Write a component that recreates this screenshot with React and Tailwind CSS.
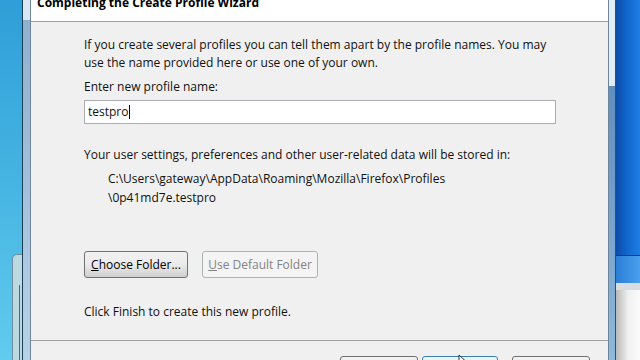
import React from 'react';

const font = { fontFamily: '"Open Sans", "Noto Sans", sans-serif' };

function WinButton({ children, className = '', disabled, hot }) {
  return (
    <div
      className={
        'flex items-center justify-center rounded-[3px] border text-[12px] leading-none ' +
        (disabled
          ? 'border-[#adb2b5] bg-[#f4f4f4] text-[#838383] '
          : hot
          ? 'border-[#3c7fb1] bg-gradient-to-b from-[#eaf6fd] to-[#bee6fd] text-black '
          : 'border-[#707070] bg-gradient-to-b from-[#f2f2f2] via-[#ebebeb] to-[#cfcfcf] text-black ') +
        className
      }
    >
      {children}
    </div>
  );
}

export default function App() {
  return (
    <div className="flex h-[360px] w-[640px] overflow-hidden bg-[#f0f0f0] text-[#111]" style={font}>
      {/* left desktop strip */}
      <div className="flex w-[22px] shrink-0 flex-col bg-gradient-to-b from-[#2f9ed8] via-[#45b4e2] to-[#62cbee]">
        <div className="h-[254px]" />
        <div className="ml-[12px] flex-1 rounded-tl-[5px] border-l border-t border-[#6f8f9e] bg-[#bcd8e0]">
          <div className="ml-[6px] mt-[30px] h-full border-l border-[#52656e]" />
        </div>
      </div>
      <div className="w-px shrink-0 bg-[#1c3f56]" />
      {/* left frame */}
      <div className="flex w-[7px] shrink-0 flex-col bg-[#a9c4dc]">
        <div className="h-[20px] bg-[#dbe7f2]" />
        <div className="flex-1 bg-gradient-to-b from-[#8fb0cf] to-[#b9d1e6]" />
      </div>
      <div className="w-px shrink-0 bg-[#6e859a]" />

      {/* dialog */}
      <div className="flex w-[577px] shrink-0 flex-col">
        <div className="relative h-[22px] shrink-0 border-b border-[#a0a0a0] bg-white">
          <div className="absolute left-[6px] top-[-5px] text-[12px] font-bold leading-[16px] text-black">
            Completing the Create Profile Wizard
          </div>
        </div>
        <div className="flex flex-1 flex-col pl-[53px] pr-[52px] text-[12px]">
          <p className="mt-[14px] leading-[18px]">
            If you create several profiles you can tell them apart by the profile names. You may use the name provided here or use one of your own.
          </p>
          <p className="mt-[6px] leading-[18px]">Enter new profile name:</p>
          <div className="mt-[4px] flex h-[24px] items-center border border-[#abadb3] bg-white pl-[3px]">
            <span>testpro</span>
            <span className="ml-px h-[14px] w-px bg-black" />
          </div>
          <p className="mt-[22px] leading-[18px]">Your user settings, preferences and other user-related data will be stored in:</p>
          <div className="ml-[24px] mt-[5px] leading-[19px]">
            <p>C:\Users\gateway\AppData\Roaming\Mozilla\Firefox\Profiles</p>
            <p>\0p41md7e.testpro</p>
          </div>
          <div className="mt-[44px] flex gap-[14px]">
            <WinButton className="h-[27px] w-[104px]">
              <span><span className="underline">C</span>hoose Folder...</span>
            </WinButton>
            <WinButton disabled className="h-[27px] w-[116px]">
              <span><span className="underline">U</span>se Default Folder</span>
            </WinButton>
          </div>
          <p className="mt-[25px] leading-[18px]">Click Finish to create this new profile.</p>
        </div>
        <div className="h-[20px] shrink-0 border-t border-[#a0a0a0] bg-[#f0f0f0]">
          <div className="relative ml-[309px] mt-[15px] flex gap-[4px]">
            <WinButton className="h-[22px] w-[78px]" />
            <WinButton hot className="h-[22px] w-[76px]" />
            <WinButton className="ml-[10px] h-[22px] w-[78px]" />
            <svg className="absolute left-[118px] top-[-1px]" width="10" height="10" viewBox="0 0 10 10">
              <path d="M1 0 L1 9 L3.5 7 L5 10 L6.5 9.3 L5 6.5 L8 6.5 Z" fill="white" stroke="black" strokeWidth="0.8" />
            </svg>
          </div>
        </div>
      </div>

      {/* right frame */}
      <div className="w-px shrink-0 bg-[#6e859a]" />
      <div className="flex w-[6px] shrink-0 flex-col bg-[#a9c4dc]">
        <div className="h-[86px] bg-[#e2ecf4]" />
        <div className="flex-1 bg-gradient-to-b from-[#5f8fc0] to-[#8fb8dc]" />
      </div>
      <div className="w-px shrink-0 bg-[#2b4f74]" />
      {/* right desktop strip */}
      <div className="flex flex-1 flex-col">
        <div className="h-[255px] bg-gradient-to-r from-[#0b4aa8] via-[#1368d0] to-[#1e7ee2]" />
        <div className="h-px bg-[#0b3d86]" />
        <div className="h-[27px] bg-gradient-to-r from-[#2a7ed6] to-[#4aa0ee]" />
        <div className="h-[7px] bg-[#d8dde4]" />
        <div className="flex-1 bg-gradient-to-r from-[#b8b8b8] via-[#f0f0f0] to-[#fafafa]" />
      </div>
    </div>
  );
}
